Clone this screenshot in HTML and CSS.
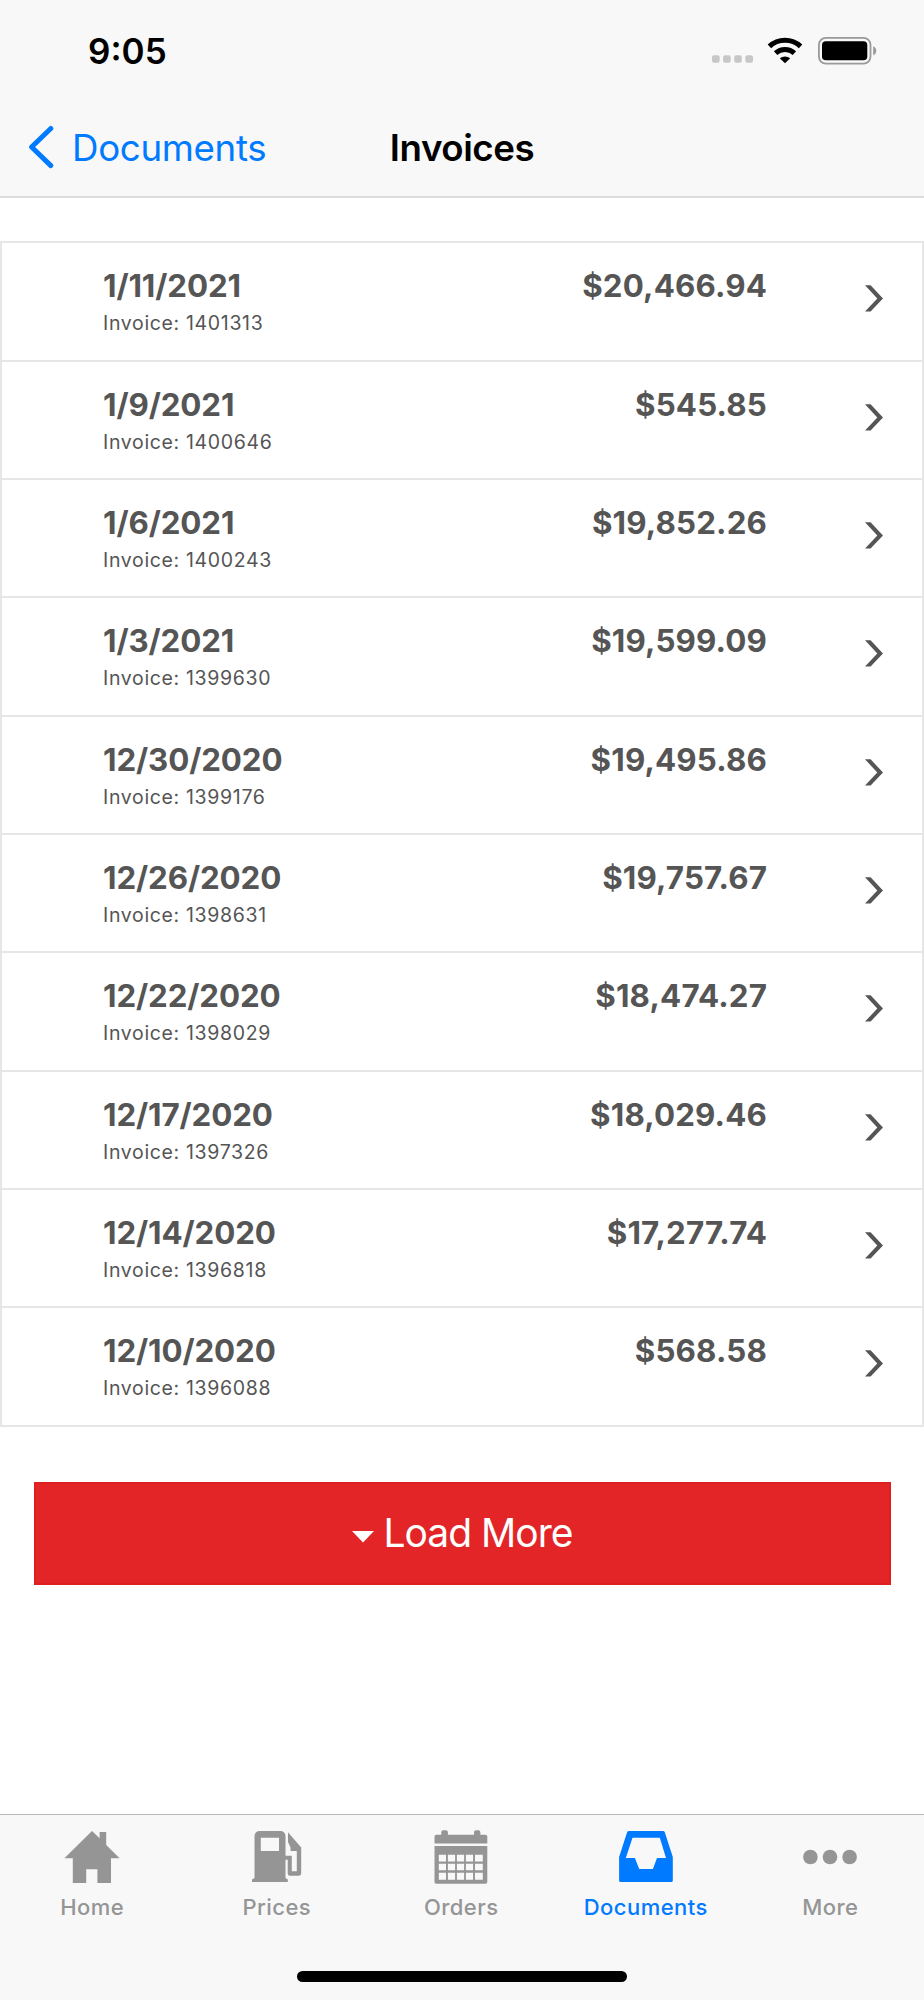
FILE: index.html
```html
<!DOCTYPE html>
<html lang="en">
<head>
    <meta charset="UTF-8">
    <meta name="viewport" content="width=device-width, initial-scale=1.0">
    <title>Invoices</title>
    <link rel="stylesheet" href="styles.css">
</head>
<body>
    <svg width="0" height="0" class="symbols">
        <symbol id="chevron" viewBox="0 0 18 27">
            <path d="M0 0.3H5.6L18 13.5L5.6 26.6H0L12.3 13.5Z" fill="#555"/>
        </symbol>
    </svg>

    <header class="header">
        <div class="status-bar">
            <span class="time">9:05</span>
            <div class="status-icons">
                <svg class="signal" width="42" height="8" viewBox="0 0 42 8" fill="#c7c7c7">
                    <rect x="0" y="0.3" width="7.6" height="7.4" rx="2"/>
                    <rect x="11.1" y="0.3" width="7.6" height="7.4" rx="2"/>
                    <rect x="22.2" y="0.3" width="7.6" height="7.4" rx="2"/>
                    <rect x="33.4" y="0.3" width="7.6" height="7.4" rx="2"/>
                </svg>
                <svg class="wifi" width="36" height="27" viewBox="0 0 36 27">
                    <path d="M2.4 9.4A22.8 22.8 0 0 1 33.6 9.4M8.6 16.1A13.8 13.8 0 0 1 27.4 16.1" fill="none" stroke="#000" stroke-width="5"/>
                    <path d="M18 26.3L12.8 21.3A8 8 0 0 1 23.2 21.3Z" fill="#000"/>
                </svg>
                <svg class="battery" width="59" height="28" viewBox="0 0 59 28">
                    <rect x="0.9" y="0.9" width="51.6" height="25.7" rx="7" fill="none" stroke="#999" stroke-width="1.8"/>
                    <rect x="4" y="4.2" width="45.3" height="19" rx="3.8" fill="#000"/>
                    <path d="M55.2 9.2C59.2 10.6 59.2 16.8 55.2 18.2Z" fill="#999"/>
                </svg>
            </div>
        </div>
        <nav class="nav-bar">
            <a class="back">
                <svg width="26" height="44" viewBox="0 0 26 44">
                    <path d="M22.8 3.5L3.6 22L22.8 40.6" fill="none" stroke="#007aff" stroke-width="5" stroke-linecap="round" stroke-linejoin="round"/>
                </svg>
                <span>Documents</span>
            </a>
            <h1>Invoices</h1>
        </nav>
    </header>

    <main>
        <ul class="invoices">
            <li>
                <div class="info"><strong>1/11/2021</strong><small>Invoice: 1401313</small></div>
                <strong class="amount">$20,466.94</strong>
                <svg class="chevron"><use href="#chevron"/></svg>
            </li>
            <li>
                <div class="info"><strong>1/9/2021</strong><small>Invoice: 1400646</small></div>
                <strong class="amount">$545.85</strong>
                <svg class="chevron"><use href="#chevron"/></svg>
            </li>
            <li>
                <div class="info"><strong>1/6/2021</strong><small>Invoice: 1400243</small></div>
                <strong class="amount">$19,852.26</strong>
                <svg class="chevron"><use href="#chevron"/></svg>
            </li>
            <li>
                <div class="info"><strong>1/3/2021</strong><small>Invoice: 1399630</small></div>
                <strong class="amount">$19,599.09</strong>
                <svg class="chevron"><use href="#chevron"/></svg>
            </li>
            <li>
                <div class="info"><strong>12/30/2020</strong><small>Invoice: 1399176</small></div>
                <strong class="amount">$19,495.86</strong>
                <svg class="chevron"><use href="#chevron"/></svg>
            </li>
            <li>
                <div class="info"><strong>12/26/2020</strong><small>Invoice: 1398631</small></div>
                <strong class="amount">$19,757.67</strong>
                <svg class="chevron"><use href="#chevron"/></svg>
            </li>
            <li>
                <div class="info"><strong>12/22/2020</strong><small>Invoice: 1398029</small></div>
                <strong class="amount">$18,474.27</strong>
                <svg class="chevron"><use href="#chevron"/></svg>
            </li>
            <li>
                <div class="info"><strong>12/17/2020</strong><small>Invoice: 1397326</small></div>
                <strong class="amount">$18,029.46</strong>
                <svg class="chevron"><use href="#chevron"/></svg>
            </li>
            <li>
                <div class="info"><strong>12/14/2020</strong><small>Invoice: 1396818</small></div>
                <strong class="amount">$17,277.74</strong>
                <svg class="chevron"><use href="#chevron"/></svg>
            </li>
            <li>
                <div class="info"><strong>12/10/2020</strong><small>Invoice: 1396088</small></div>
                <strong class="amount">$568.58</strong>
                <svg class="chevron"><use href="#chevron"/></svg>
            </li>
        </ul>

        <button class="load-more">
            <svg width="22" height="12" viewBox="0 0 22 12"><path d="M0 0H22L11 11.5Z" fill="#fff"/></svg>
            <span>Load More</span>
        </button>
    </main>

    <footer class="footer">
        <div class="tabs">
            <a class="tab">
                <svg width="56" height="54" viewBox="0 0 56 54" fill="#959595">
                    <path d="M28 1L35.6 8.3V2H42.2V15L55.6 28.3H47V53H33.4V39.3H22.2V53H8.8V28.3H0.4Z"/>
                </svg>
                <span>Home</span>
            </a>
            <a class="tab">
                <svg width="50" height="54" viewBox="0 0 50 54" fill="#959595">
                    <path fill-rule="evenodd" d="M2.5 6.5Q2.5 1 8 1H28Q33.5 1 33.5 6.5V25.7H39.8V41.2H44.8V20.9H38.5V17.5L36 12V2.3L49.2 17.5V43Q49.2 45.8 46.5 45.8H38Q35.7 45.8 35.7 43V29.7H33.5V48L35.8 49.5V52H0V49.5L2.5 48ZM8.8 7.8V21H27V7.8Z"/>
                </svg>
                <span>Prices</span>
            </a>
            <a class="tab">
                <svg width="54" height="54" viewBox="0 0 54 54" fill="#959595">
                    <path d="M0.5 13.6V6.5Q0.5 4.7 2.3 4.7H7.3V2.3Q7.3 0.2 9.4 0.2H11.8Q13.9 0.2 13.9 2.3V4.7H40V2.3Q40 0.2 42.1 0.2H44.3Q46.4 0.2 46.4 2.3V4.7H51.5Q53.3 4.7 53.3 6.5V13.6Z"/>
                    <path fill-rule="evenodd" d="M0.5 16H53.3V52Q53.3 53.7 51.5 53.7H2.3Q0.5 53.7 0.5 52ZM4.8 24.8V31.4H12V24.8ZM13.9 24.8V31.4H21.1V24.8ZM22.9 24.8V31.4H30.1V24.8ZM31.9 24.8V31.4H39.1V24.8ZM41 24.8V31.4H48.8V24.8ZM4.8 33.7V40.3H12V33.7ZM13.9 33.7V40.3H21.1V33.7ZM22.9 33.7V40.3H30.1V33.7ZM31.9 33.7V40.3H39.1V33.7ZM41 33.7V40.3H48.8V33.7ZM4.8 42.8V49.7H12V42.8ZM13.9 42.8V49.7H21.1V42.8ZM22.9 42.8V49.7H30.1V42.8ZM31.9 42.8V49.7H39.1V42.8ZM41 42.8V49.7H48.8V42.8Z"/>
                </svg>
                <span>Orders</span>
            </a>
            <a class="tab active">
                <svg width="54" height="54" viewBox="0 0 54 54" fill="#007aff">
                    <path fill-rule="evenodd" d="M10 1H44Q45.3 1 45.8 2.3L53.8 27V50.5Q53.8 52 52.3 52H1.6Q0.1 52 0.1 50.5V27L8.1 2.3Q8.6 1 10 1ZM13.5 7.8L6.8 27.9H15.9L20.2 39H33.9L38 27.9H47L40.8 7.8Z"/>
                </svg>
                <span>Documents</span>
            </a>
            <a class="tab">
                <svg width="54" height="54" viewBox="0 0 54 54" fill="#959595">
                    <circle cx="7.4" cy="27" r="7.3"/>
                    <circle cx="27" cy="27" r="7.3"/>
                    <circle cx="46.6" cy="27" r="7.3"/>
                </svg>
                <span>More</span>
            </a>
        </div>
        <div class="home-indicator"></div>
    </footer>
</body>
</html>
```
FILE: styles.css
```css
* {
    box-sizing: border-box;
}
body {
    margin: 0;
    height: 2000px;
    display: flex;
    flex-direction: column;
    font-family: Inter, "Liberation Sans", sans-serif;
    background: #fff;
    color: #555;
}
svg {
    display: block;
    flex: none;
}
.symbols {
    display: none;
}
.header {
    height: 198px;
    background: #f8f8f8;
    border-bottom: 2px solid #dcdcdc;
}
.status-bar {
    display: flex;
    justify-content: space-between;
    height: 102px;
    padding: 0 47px 0 88px;
}
.time {
    padding-top: 30px;
    line-height: 42px;
    font-size: 35px;
    font-weight: 600;
    color: #000;
}
.status-icons {
    display: flex;
    align-items: flex-start;
    padding-top: 37px;
}
.signal {
    margin: 18px 13px 0 0;
}
.wifi {
    margin-right: 15px;
}
.nav-bar {
    display: grid;
    grid-template-columns: 1fr auto 1fr;
    align-items: center;
    height: 90px;
    padding: 0 28px;
}
.back {
    display: flex;
    align-items: center;
    gap: 18px;
    font-size: 36.7px;
    letter-spacing: -0.35px;
    color: #007aff;
}
.nav-bar h1 {
    margin: 0;
    font-size: 36.7px;
    font-weight: 600;
    letter-spacing: -0.45px;
    color: #000;
}
.invoices {
    list-style: none;
    margin: 43.4px 0 0;
    padding: 0;
    border: 2px solid #e6e6e6;
    border-bottom: none;
}
.invoices li {
    display: flex;
    height: 118.33px;
    padding: 22px 39px 0 101px;
    border-bottom: 2px solid #e6e6e6;
}
.info {
    flex: 1;
    display: flex;
    flex-direction: column;
}
.invoices strong {
    font-size: 31.3px;
    line-height: 42px;
    font-weight: 700;
    letter-spacing: -0.1px;
}
.invoices .amount {
    font-weight: 650;
    letter-spacing: 0.15px;
}
.invoices small {
    font-size: 19.5px;
    line-height: 33px;
    letter-spacing: 0.66px;
}
.chevron {
    width: 18px;
    height: 27px;
    margin: 20px 0 0 98px;
}
.load-more {
    display: flex;
    align-items: center;
    justify-content: center;
    gap: 10px;
    width: 857px;
    height: 103px;
    margin: 55.3px 0 0 33.5px;
    padding: 0 0 2px;
    border: 2px solid #df1e20;
    background: #e32527;
    color: #fff;
    font-family: inherit;
    font-size: 39px;
    font-weight: 400;
    letter-spacing: -1px;
}
.load-more svg {
    margin-top: 9px;
}
.footer {
    margin-top: auto;
    height: 186px;
    background: #f8f8f8;
    border-top: 1px solid #b8b8b8;
}
.tabs {
    display: grid;
    grid-template-columns: repeat(5, 184.5px);
    padding-top: 15px;
}
.tab {
    display: flex;
    flex-direction: column;
    align-items: center;
    gap: 9px;
    font-size: 22px;
    line-height: 28px;
    font-weight: 500;
    letter-spacing: 0.45px;
    color: #959595;
}
.tab.active {
    color: #007aff;
}
.home-indicator {
    width: 330px;
    height: 11px;
    margin: 50px auto 0;
    border-radius: 6px;
    background: #000;
}
```
